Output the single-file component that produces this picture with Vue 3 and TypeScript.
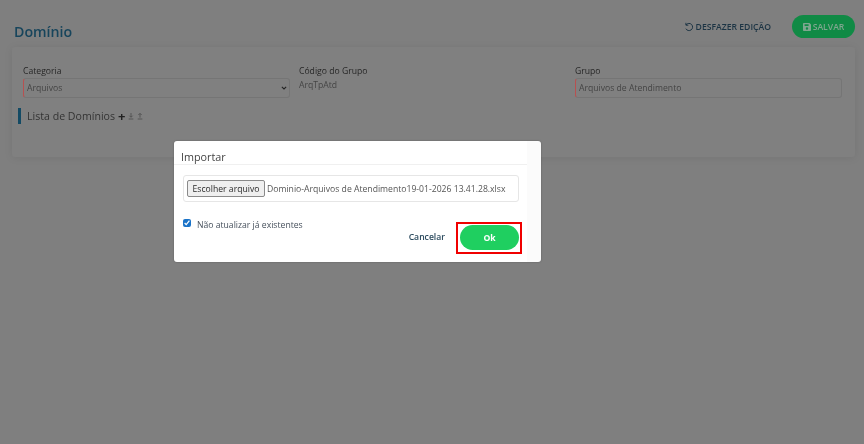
<template>
  <div class="page">
    <header class="top">
      <h1 class="title">Domínio</h1>
      <div class="actions">
        <button class="undo">
          <svg width="10" height="10" viewBox="0 0 12 12" fill="none" stroke="currentColor" stroke-width="1.2">
            <path d="M2.600 3.400A4.300 4.300 0 1 1 2.200 8" />
            <path d="M2.300 1v2.800h2.900" />
          </svg>
          DESFAZER EDIÇÃO
        </button>
        <button class="save">
          <svg width="8" height="8" viewBox="0 0 10 10">
            <path fill="currentColor" fill-rule="evenodd" d="M1 0h7l2 2v7a1 1 0 0 1-1 1H1a1 1 0 0 1-1-1V1a1 1 0 0 1 1-1zm1 1.500v2.200h5V1.500zM5 5.400a1.500 1.500 0 1 0 0 3 1.500 1.500 0 0 0 0-3z" />
          </svg>
          SALVAR
        </button>
      </div>
    </header>

    <section class="card">
      <div class="fields">
        <div class="field">
          <label>Categoria</label>
          <div class="input">
            Arquivos
            <svg class="chev" width="6" height="4" viewBox="0 0 7 5" fill="none" stroke="currentColor" stroke-width="1.300">
              <path d="M.8 1l2.700 2.700L6.200 1" />
            </svg>
          </div>
        </div>
        <div class="field">
          <label>Código do Grupo</label>
          <div class="plain">ArqTpAtd</div>
        </div>
        <div class="field">
          <label>Grupo</label>
          <div class="input">Arquivos de Atendimento</div>
        </div>
      </div>
      <div class="list-title">
        <span class="list-text">Lista de Domínios</span>
        <span class="plus">+</span>
        <svg v-for="dir in iconDirs" :key="dir" class="transfer" width="6" height="8" viewBox="0 0 9 11" fill="none" stroke="currentColor" stroke-width="1.200">
          <path :d="dir" />
          <path d="M1 10h7" />
        </svg>
      </div>
    </section>

    <div class="modal">
      <div class="modal-head">Importar</div>
      <div class="modal-body">
        <div class="file-box">
          <button class="file-btn">Escolher arquivo</button>
          <span class="file-name">{{ fileName }}</span>
        </div>
        <div class="modal-foot">
          <label class="check">
            <input type="checkbox" checked />
            <span>Não atualizar já existentes</span>
          </label>
          <div class="modal-actions">
            <button class="cancel">Cancelar</button>
            <div class="highlight">
              <button class="ok">Ok</button>
            </div>
          </div>
        </div>
      </div>
    </div>
  </div>
</template>

<script setup lang="ts">
const fileName = 'Dominio-Arquivos de Atendimento19-01-2026 13.41.28.xlsx'

// download / upload arrows
const iconDirs: string[] = ['M4.500 1v6M2 5l2.500 2.500L7 5', 'M4.500 8V2M2 4l2.500-2.500L7 4']
</script>

<style>
html,
body {
  margin: 0;
  background: #7f7f7f;
}
</style>

<style scoped>
/* la capture de référence est légèrement floue */
.page {
  position: relative;
  width: 864px;
  height: 444px;
  box-sizing: border-box;
  padding: 15px 9px 0 12px;
  overflow: hidden;
  background: #7f7f7f;
  font-family: 'Open Sans', sans-serif;
  font-size: 8.64px;
  color: #353535;
  filter: blur(0.35px);
}

button {
  font-family: inherit;
  border: 0;
  background: none;
  padding: 0;
}

.top {
  display: flex;
  justify-content: space-between;
  height: 32px;
}

.title {
  margin: 7px 0 0 2px;
  font-size: 14.200px;
  line-height: 20px;
  font-weight: 600;
  color: #17455c;
}

.actions {
  display: flex;
  align-items: flex-start;
  gap: 21px;
}

.undo {
  display: flex;
  align-items: center;
  gap: 2px;
  height: 23px;
  font-size: 8.640px;
  font-weight: 600;
  color: #1c3444;
}

.save {
  display: flex;
  align-items: center;
  justify-content: center;
  gap: 2px;
  width: 63px;
  height: 23px;
  border-radius: 12px;
  background: #108a45;
  font-size: 8.640px;
  font-weight: 600;
  color: #7fa68f;
}

.card {
  height: 110px;
  box-sizing: border-box;
  padding: 17px 12px 0 11px;
  border-radius: 3px;
  background: #808080;
  box-shadow: 0 1px 8px rgba(0, 0, 0, 0.08);
}

.fields {
  display: grid;
  grid-template-columns: repeat(3, 267px);
  column-gap: 9px;
}

.field label {
  display: block;
  font-size: 8.640px;
  line-height: 14px;
  font-weight: 500;
  color: #262626;
}

.input {
  position: relative;
  height: 20px;
  box-sizing: border-box;
  padding-left: 3px;
  border: 1px solid #757575;
  border-left-color: #b85050;
  border-radius: 3px;
  line-height: 18px;
  color: #444;
}

.chev {
  position: absolute;
  right: 2px;
  top: 7px;
  color: #222;
}

.plain {
  line-height: 14px;
  color: #444;
}

.list-title {
  display: flex;
  align-items: center;
  gap: 2px;
  margin: 10px 0 0 -5px;
  height: 16px;
  padding-left: 6px;
  border-left: 3px solid #134a64;
}

.list-text {
  font-size: 10.600px;
  font-weight: 500;
  color: #333;
  margin-right: 1px;
}

.plus {
  font-size: 13px;
  font-weight: 700;
  line-height: 14px;
  color: #222;
}

.transfer {
  color: #4a4a4a;
  margin-left: 1px;
}

.modal {
  position: absolute;
  left: 174px;
  top: 141px;
  width: 367px;
  height: 121px;
  box-sizing: border-box;
  border-radius: 3px;
  background: linear-gradient(to left, #fbfbfb 14px, #fff 14px);
  box-shadow: 0 0 2px rgba(0, 0, 0, 0.3);
}

.modal-head {
  height: 24px;
  box-sizing: border-box;
  margin-right: 14px;
  padding: 8px 0 0 7px;
  border-bottom: 1px solid #f0f0f0;
  font-size: 10.800px;
  line-height: 15px;
  font-weight: 500;
  color: #454545;
}

.modal-body {
  padding: 10px 22px 0 9px;
}

.file-box {
  display: flex;
  align-items: center;
  gap: 2px;
  height: 27px;
  box-sizing: border-box;
  padding-left: 3px;
  border: 1px solid #e6e6e6;
  border-radius: 3px;
}

.file-btn {
  width: 78px;
  height: 17px;
  border: 1px solid #8a8a8a;
  border-radius: 2px;
  background: #efefef;
  font-size: 8.640px;
  color: #2a2a2a;
}

.file-name {
  color: #555;
  white-space: nowrap;
}

.modal-foot {
  display: flex;
  justify-content: space-between;
  margin-top: 17px;
}

.check {
  display: flex;
  align-items: flex-start;
  gap: 6px;
  height: 10px;
  color: #46505c;
}

.check span {
  line-height: 12px;
}

.check input {
  width: 8px;
  height: 8px;
  margin: 0;
  accent-color: #1a73c8;
}

.modal-actions {
  display: flex;
  align-items: center;
  gap: 11px;
  margin: 3px -3px 0 0;
}

.cancel {
  font-size: 8.640px;
  font-weight: 600;
  line-height: 10px;
  margin-top: -2px;
  color: #2b4a5e;
}

.highlight {
  padding: 1px 1px 2px 2px;
  border: 2px solid #f00000;
}

.ok {
  display: block;
  width: 59px;
  height: 25px;
  border-radius: 13px;
  background: #1fcf60;
  font-size: 8.640px;
  font-weight: 700;
  color: #fff;
}
</style>
